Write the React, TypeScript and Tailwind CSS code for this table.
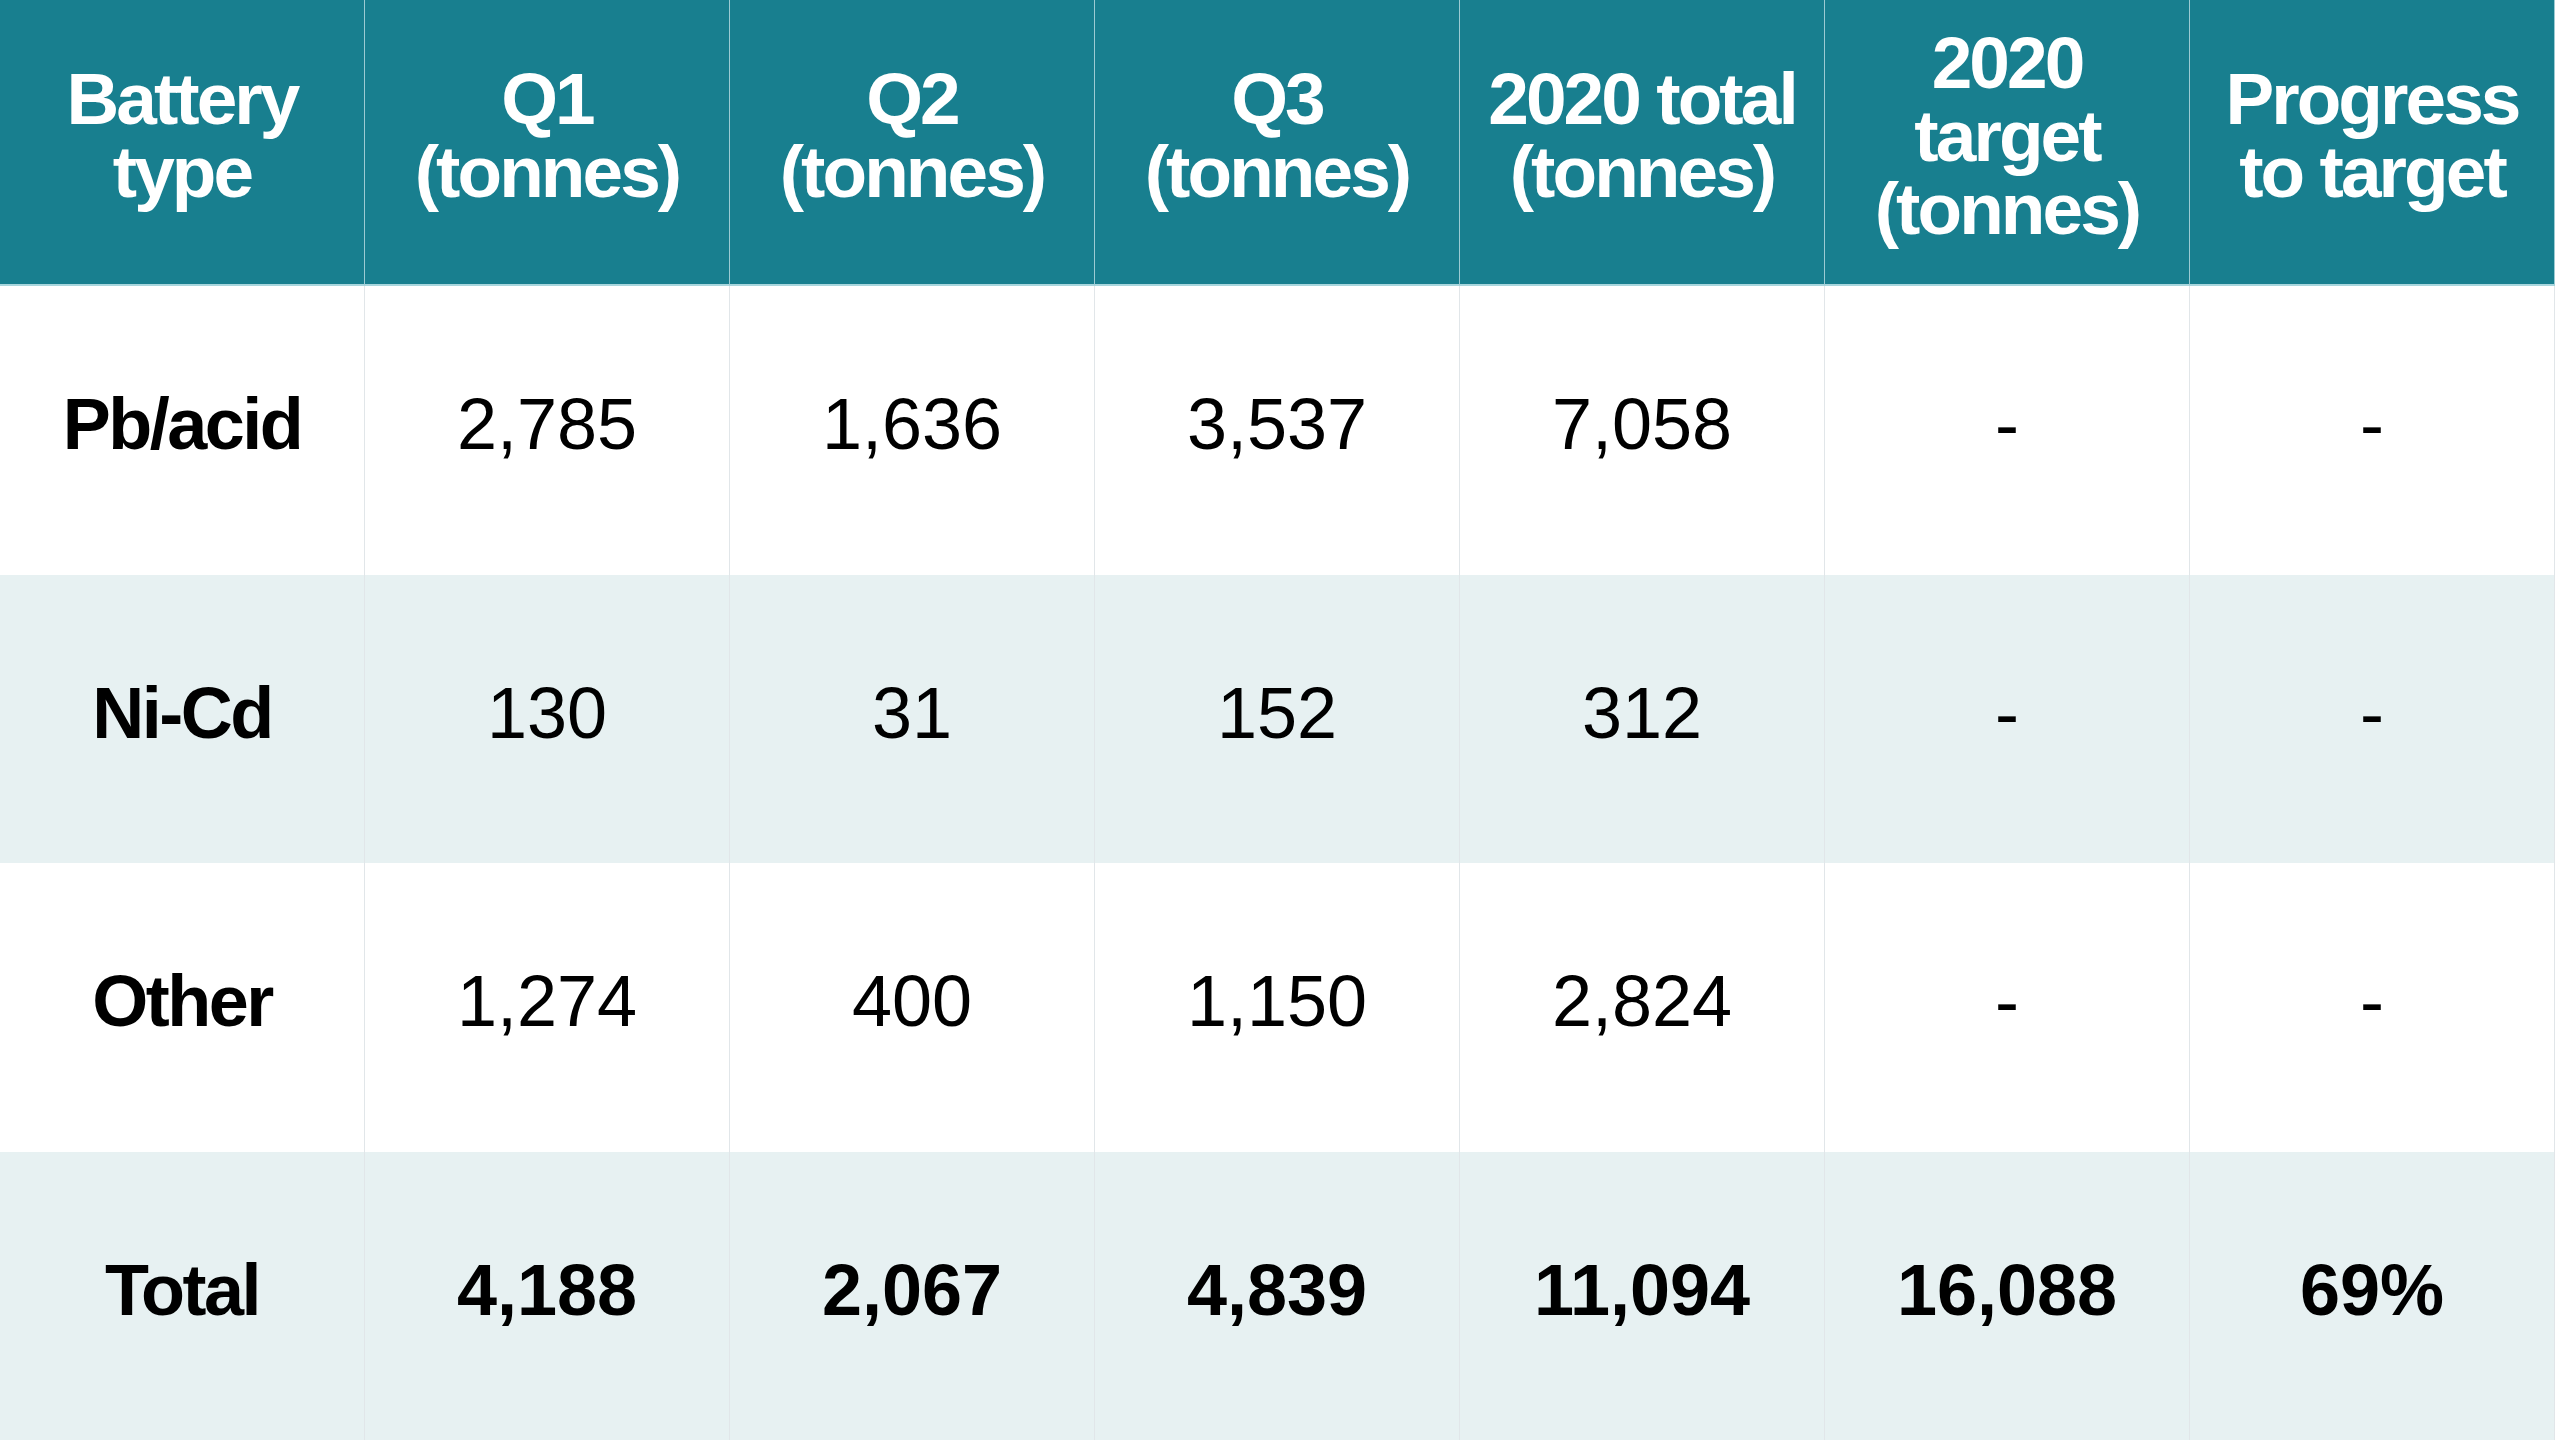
import React from "react";

const headers: string[][] = [
  ["Battery", "type"],
  ["Q1", "(tonnes)"],
  ["Q2", "(tonnes)"],
  ["Q3", "(tonnes)"],
  ["2020 total", "(tonnes)"],
  ["2020", "target", "(tonnes)"],
  ["Progress", "to target"],
];

const rows: { cells: string[]; bold: boolean; tint: boolean }[] = [
  { cells: ["Pb/acid", "2,785", "1,636", "3,537", "7,058", "-", "-"], bold: false, tint: false },
  { cells: ["Ni-Cd", "130", "31", "152", "312", "-", "-"], bold: false, tint: true },
  { cells: ["Other", "1,274", "400", "1,150", "2,824", "-", "-"], bold: false, tint: false },
  { cells: ["Total", "4,188", "2,067", "4,839", "11,094", "16,088", "69%"], bold: true, tint: true },
];

export default function App() {
  return (
    <div
      className="w-[2560px] h-[1440px] bg-white overflow-hidden"
      style={{ fontFamily: '"Liberation Sans", Arial, Helvetica, sans-serif' }}
    >
      <div className="w-[2555px] h-[1440px] grid grid-cols-[repeat(7,365px)] grid-rows-[286px_repeat(4,1fr)]">
        {headers.map((lines, i) => (
          <div
            key={"h" + i}
            className="bg-[#187f8f] text-white font-bold text-[73px] leading-[73px] tracking-[-0.04em] flex flex-col items-center justify-center text-center pb-[14px] border-r border-b-2 border-r-[#9ccbd3] border-b-[#a8d6dd]"
          >
            {lines.map((l, j) => (
              <span key={j} className="whitespace-nowrap">
                {l}
              </span>
            ))}
          </div>
        ))}
        {rows.map((r, ri) =>
          r.cells.map((c, ci) => (
            <div
              key={ri + "-" + ci}
              className={
                "flex items-center justify-center text-black text-[72px] leading-none border-r border-r-[#e1e6e9] pb-[12px] " +
                (r.tint ? "bg-[#e7f1f2] " : "bg-white ") +
                (r.bold || ci === 0 ? "font-bold " : "font-normal ") +
                (ci === 0 ? "tracking-[-0.035em]" : "")
              }
            >
              {c}
            </div>
          ))
        )}
      </div>
    </div>
  );
}
